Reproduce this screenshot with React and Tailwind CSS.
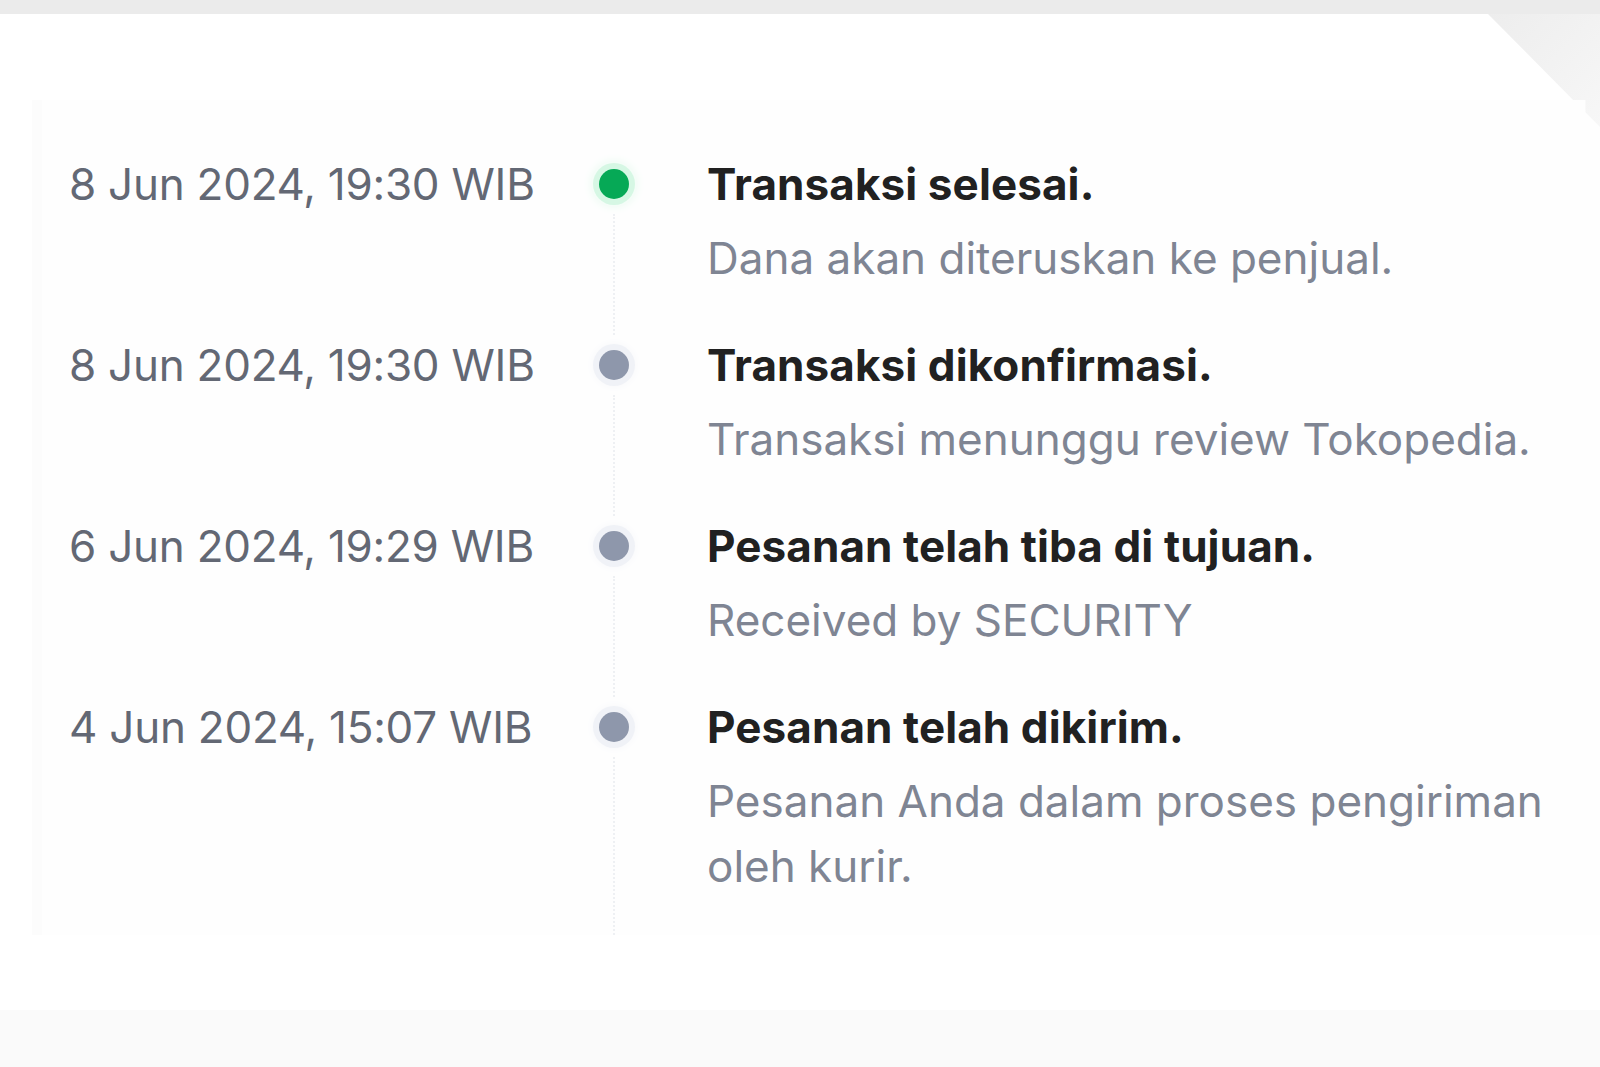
const events = [
  { date: '8 Jun 2024, 19:30 WIB', title: 'Transaksi selesai.', desc: 'Dana akan diteruskan ke penjual.', active: true },
  { date: '8 Jun 2024, 19:30 WIB', title: 'Transaksi dikonfirmasi.', desc: 'Transaksi menunggu review Tokopedia.' },
  { date: '6 Jun 2024, 19:29 WIB', title: 'Pesanan telah tiba di tujuan.', desc: 'Received by SECURITY' },
  { date: '4 Jun 2024, 15:07 WIB', title: 'Pesanan telah dikirim.', desc: 'Pesanan Anda dalam proses pengiriman oleh kurir.' },
];

function Row({ item, last }) {
  return (
    <div className="flex">
      <div className="w-[548px] shrink-0 pl-[27px] h-[60px] flex items-center text-[44px] tracking-[-0.25px] text-[#636874]">
        {item.date}
      </div>
      <div className="w-[48px] shrink-0 flex flex-col items-center">
        <div className="h-[60px] flex items-center">
          {item.active ? (
            <span className="block w-[30px] h-[30px] rounded-full bg-[#06a956] shadow-[0_0_0_6px_#d6f7e4,0_0_10px_8px_#ecfbf2]" />
          ) : (
            <span className="block w-[30px] h-[30px] rounded-full bg-[#8e97ab] shadow-[0_0_0_6px_#f0f2f7,0_0_10px_6px_#f7f8fb]" />
          )}
        </div>
        <div className="flex-1 border-l-2 border-dotted border-[#eef0f3]" />
      </div>
      <div className={`ml-[69px] w-[880px] ${last ? 'pb-[36px]' : 'pb-[44px]'}`}>
        <div className="h-[60px] flex items-center text-[44px] font-bold tracking-[0.1px] text-[#212121]">{item.title}</div>
        <p className="mt-[12px] text-[44px] leading-[65px] text-[#7f8593]">{item.desc}</p>
      </div>
    </div>
  );
}

export default function App() {
  return (
    <div className="h-[1067px] w-full flex flex-col bg-white overflow-hidden" style={{ fontFamily: 'Inter, "Noto Sans", sans-serif' }}>
      <div className="h-[14px] bg-[#ebebeb]" />
      <div className="relative flex-1 bg-white">
        <div className="absolute right-0 top-0 w-[112px] h-[113px] bg-gradient-to-br from-[#ededed] to-[#f7f7f7] [clip-path:polygon(0_0,100%_0,100%_100%,87%_87%,87%_76%,76%_76%)]" />
        <div className="pt-[86px] pl-[32px]">
          <div className="pt-[54px] bg-[#fefefe] border-l-[10px] border-[#fcfcfc]">
            {events.map((e, i) => (
              <Row key={i} item={e} last={i === events.length - 1} />
            ))}
          </div>
        </div>
      </div>
      <div className="h-[57px] bg-[#fafafa]" />
    </div>
  );
}
